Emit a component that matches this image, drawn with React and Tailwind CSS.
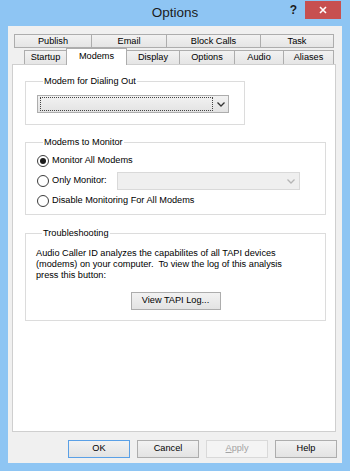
import React from 'react';

const row1 = [
  { label: 'Publish', w: 'w-[78px]' },
  { label: 'Email', w: 'w-[75px]' },
  { label: 'Block Calls', w: 'w-[94px]' },
  { label: 'Task', w: 'w-[73px]' },
];

const row2 = [
  { label: 'Startup', w: 'w-[42px]' },
  { label: 'Modems', w: 'w-[61px]', active: true },
  { label: 'Display', w: 'w-[53px]' },
  { label: 'Options', w: 'w-[55px]' },
  { label: 'Audio', w: 'w-[49px]' },
  { label: 'Aliases', w: 'w-[50px]' },
];

const Chevron = ({ color = '#333' }) => (
  <svg width="8" height="5" viewBox="0 0 8 5">
    <polyline points="0.5,0.5 4,4 7.5,0.5" fill="none" stroke={color} strokeWidth="1.3" />
  </svg>
);

const Radio = ({ checked, children }) => (
  <label className="flex items-center gap-[3px]">
    <span className="w-[12px] h-[12px] rounded-full border border-[#3c3c3c] bg-white flex items-center justify-center">
      {checked && <span className="w-[6px] h-[6px] rounded-full bg-[#1c1c1c]" />}
    </span>
    <span>{children}</span>
  </label>
);

const GroupBox = ({ title, className = '', children }) => (
  <fieldset className={`border border-[#dcdcdc] ${className}`}>
    <legend className="ml-[6px] px-[1px] leading-[11px]">{title}</legend>
    {children}
  </fieldset>
);

const Button = ({ children, variant = 'normal' }) => {
  const styles = {
    normal: 'border-[#adadad] bg-gradient-to-b from-[#f2f2f2] to-[#e3e3e3] text-black',
    default: 'border-[#5aa0e6] bg-gradient-to-b from-[#f2f2f2] to-[#e3e3e3] text-black',
    disabled: 'border-[#d9d9d9] bg-[#f4f4f4] text-[#a3a3a3]',
  };
  return (
    <button className={`w-[62px] h-[18px] border flex items-center justify-center ${styles[variant]}`}>
      {children}
    </button>
  );
};

export default function App() {
  return (
    <div className="w-[350px] h-[471px] bg-[#8ec5f3] px-[8px] pb-[8px] flex flex-col font-['Liberation_Sans',Arial,sans-serif] text-[9.2px] text-black">
      {/* title bar */}
      <div className="relative h-[26px] flex justify-center">
        <span className="mt-[4px] text-[13.5px] leading-[18px] text-[#1b1b1b]">Options</span>
        <span className="absolute right-[45px] top-[3px] text-[12px] font-bold leading-[14px] text-[#1b1b1b]">?</span>
        <div className="absolute right-[1px] top-[1px] w-[36px] h-[18px] bg-[#c75050] flex items-center justify-center">
          <svg width="8" height="8" viewBox="0 0 8 8">
            <path d="M1 1 L7 7 M7 1 L1 7" stroke="#fff" strokeWidth="1.6" />
          </svg>
        </div>
      </div>

      {/* client area */}
      <div className="flex-1 bg-[#f0f0f0] flex flex-col pt-[8px] pb-[5px]">
        {/* back tab row */}
        <div className="flex ml-[6px] h-[14px]">
          {row1.map((t, i) => (
            <div
              key={t.label}
              className={`${t.w} h-[14px] border-y border-r ${i === 0 ? 'border-l' : ''} border-[#adadad] bg-gradient-to-b from-[#f2f2f2] to-[#e5e5e5] flex items-center justify-center leading-[11px]`}
            >
              {t.label}
            </div>
          ))}
        </div>

        {/* front tab row */}
        <div className="flex ml-[16px] h-[16px] items-start">
          {row2.map((t, i) =>
            t.active ? (
              <div
                key={t.label}
                className={`${t.w} h-[17px] relative z-10 bg-white border-x border-t border-[#adadad] flex items-start justify-center pt-[2px] leading-[11px]`}
              >
                {t.label}
              </div>
            ) : (
              <div
                key={t.label}
                className={`${t.w} h-[14px] mt-[2px] border-t ${i === 0 ? 'border-l' : ''} ${row2[i + 1]?.active ? '' : 'border-r'} border-[#adadad] bg-gradient-to-b from-[#f2f2f2] to-[#e5e5e5] flex items-center justify-center leading-[11px]`}
              >
                {t.label}
              </div>
            )
          )}
        </div>

        {/* panel */}
        <div className="ml-[4px] w-[324px] h-[368px] bg-white border border-[#cfcfcf] pt-[11px] pl-[12px] flex flex-col">
          <GroupBox title="Modem for Dialing Out" className="w-[220px] pl-[11px] pt-[8px] pb-[11px]">
            <div className="w-[192px] h-[18px] border border-[#adadad] bg-gradient-to-b from-[#f2f2f2] to-[#e3e3e3] flex items-center pl-[2px]">
              <div className="w-[173px] h-[14px] border border-dotted border-[#444]" />
              <div className="flex-1 flex items-center justify-center">
                <Chevron />
              </div>
            </div>
          </GroupBox>

          <GroupBox title="Modems to Monitor" className="w-[301px] mt-[12px] pl-[11px] pt-[3px] pb-[3px]">
            <div className="h-[20px] flex items-center">
              <Radio checked>Monitor All Modems</Radio>
            </div>
            <div className="h-[20px] flex items-center">
              <div className="w-[80px]">
                <Radio>Only Monitor:</Radio>
              </div>
              <div className="w-[183px] h-[18px] border border-[#d9d9d9] bg-[#efefef] flex items-center justify-end pr-[4px]">
                <Chevron color="#b5b5b5" />
              </div>
            </div>
            <div className="h-[20px] flex items-center">
              <Radio>Disable Monitoring For All Modems</Radio>
            </div>
          </GroupBox>

          <GroupBox title="Troubleshooting" className="w-[301px] mt-[13px] pl-[10px] pt-[9px] pb-[10px]">
            <p className="leading-[11px] whitespace-pre">
              {'Audio Caller ID analyzes the capabilites of all TAPI devices\n(modems) on your computer.  To view the log of this analysis\npress this button:'}
            </p>
            <div className="flex justify-center mt-[11px] pr-[10px]">
              <button className="w-[90px] h-[18px] border border-[#adadad] bg-gradient-to-b from-[#f2f2f2] to-[#e3e3e3] flex items-center justify-center">
                View TAPI Log...
              </button>
            </div>
          </GroupBox>
        </div>

        {/* dialog buttons */}
        <div className="mt-[8px] flex justify-end gap-[7px] pr-[5px]">
          <Button variant="default">OK</Button>
          <Button>Cancel</Button>
          <Button variant="disabled">
            <span><span className="underline">A</span>pply</span>
          </Button>
          <Button>Help</Button>
        </div>
      </div>
    </div>
  );
}
